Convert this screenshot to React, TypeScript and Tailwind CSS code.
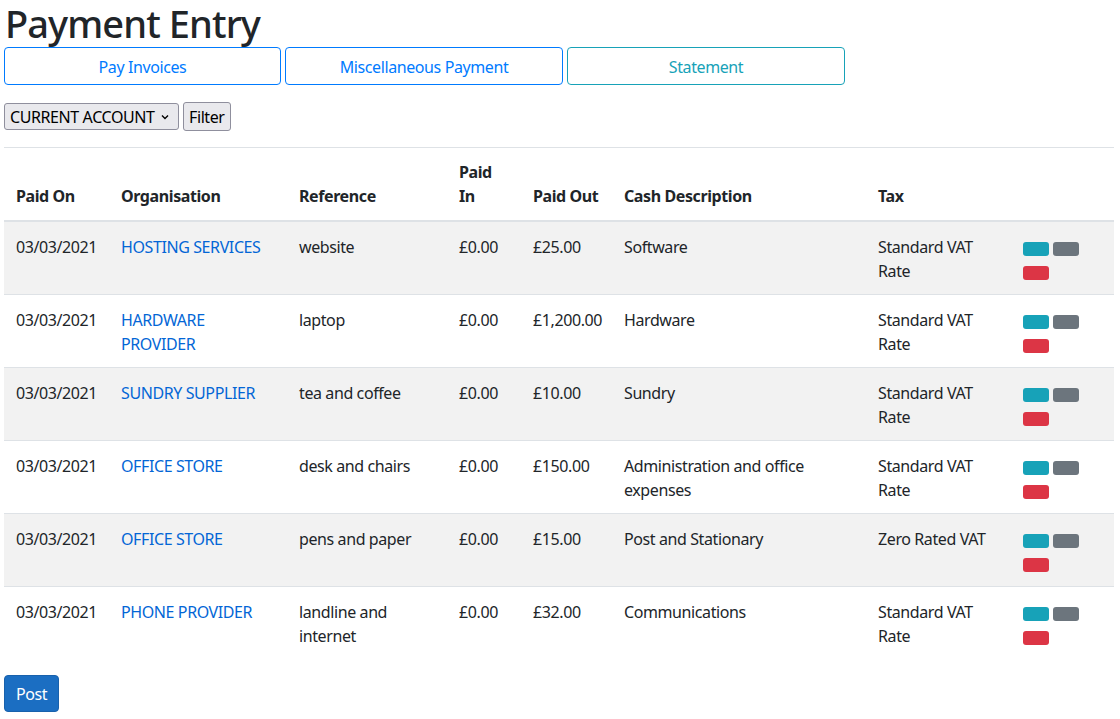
import React from "react";

type Row = {
  date: string;
  org: string;
  ref: string;
  paidIn: string;
  paidOut: string;
  desc: string;
  tax: string;
};

const rows: Row[] = [
  { date: "03/03/2021", org: "HOSTING SERVICES", ref: "website", paidIn: "£0.00", paidOut: "£25.00", desc: "Software", tax: "Standard VAT Rate" },
  { date: "03/03/2021", org: "HARDWARE PROVIDER", ref: "laptop", paidIn: "£0.00", paidOut: "£1,200.00", desc: "Hardware", tax: "Standard VAT Rate" },
  { date: "03/03/2021", org: "SUNDRY SUPPLIER", ref: "tea and coffee", paidIn: "£0.00", paidOut: "£10.00", desc: "Sundry", tax: "Standard VAT Rate" },
  { date: "03/03/2021", org: "OFFICE STORE", ref: "desk and chairs", paidIn: "£0.00", paidOut: "£150.00", desc: "Administration and office expenses", tax: "Standard VAT Rate" },
  { date: "03/03/2021", org: "OFFICE STORE", ref: "pens and paper", paidIn: "£0.00", paidOut: "£15.00", desc: "Post and Stationary", tax: "Zero Rated VAT" },
  { date: "03/03/2021", org: "PHONE PROVIDER", ref: "landline and internet", paidIn: "£0.00", paidOut: "£32.00", desc: "Communications", tax: "Standard VAT Rate" },
];

export default function App() {
  return (
    <div
      className="min-h-[719px] bg-white px-1 text-[16px] leading-6 tracking-[-0.025em] text-[#212529]"
      style={{ fontFamily: '"Segoe UI", "Noto Sans", "Open Sans", sans-serif' }}
    >
      <h1 className="whitespace-nowrap pl-[1px] text-[38px] font-medium leading-[47px] tracking-[-0.9px]">Payment Entry</h1>
      <div className="flex gap-1">
        <button className="h-[38px] w-[277px] rounded border border-[#007bff] bg-white pt-[2px] text-[#007bff]">Pay Invoices</button>
        <button className="h-[38px] w-[278px] rounded border border-[#007bff] bg-white pt-[2px] text-[#007bff]">Miscellaneous Payment</button>
        <button className="h-[38px] w-[278px] rounded border border-[#17a2b8] bg-white pt-[2px] text-[#17a2b8]">Statement</button>
      </div>
      <div className="mt-[17px] flex items-center gap-1">
        <div className="flex h-[27px] w-[175px] items-center justify-between whitespace-nowrap rounded-[3px] border border-[#8f8f9d] bg-[#e9e9ed] pl-[5px] pr-[9px] text-black">
          <span>CURRENT ACCOUNT</span>
          <svg width="8" height="6" viewBox="0 0 8 6" fill="none" stroke="#000" strokeWidth="1.4">
            <path d="M1 1.5l3 3 3-3" />
          </svg>
        </div>
        <button className="h-[29px] rounded-[3px] border border-[#8f8f9d] bg-[#e9e9ed] px-[5px] text-black">Filter</button>
      </div>
      <table className="mt-4 w-[1110px] table-fixed border-collapse">
        <colgroup>
          <col className="w-[105px]" />
          <col className="w-[178px]" />
          <col className="w-[160px]" />
          <col className="w-[74px]" />
          <col className="w-[91px]" />
          <col className="w-[254px]" />
          <col className="w-[145px]" />
          <col className="w-[103px]" />
        </colgroup>
        <thead>
          <tr className="text-left align-bottom">
            {["Paid On", "Organisation", "Reference", "Paid In", "Paid Out", "Cash Description", "Tax", ""].map((h, i) => (
              <th key={i} className="whitespace-nowrap border-t border-b-2 border-t-[#dee2e6] border-b-[#dee2e6] p-3 font-bold">
                {h === "Paid In" ? (
                  <>
                    Paid
                    <br />
                    In
                  </>
                ) : (
                  h
                )}
              </th>
            ))}
          </tr>
        </thead>
        <tbody>
          {rows.map((r, i) => (
            <tr key={i} className={`align-top ${i % 2 === 0 ? "bg-[#f2f2f2]" : "bg-white"}`}>
              <td className="border-t border-[#dee2e6] p-3 pt-[13px] pb-[11px]">{r.date}</td>
              <td className="border-t border-[#dee2e6] p-3 pt-[13px] pb-[11px]">
                <a className="text-[#0366d6]">{r.org}</a>
              </td>
              <td className="border-t border-[#dee2e6] p-3 pt-[13px] pb-[11px]">{r.ref}</td>
              <td className="border-t border-[#dee2e6] p-3 pt-[13px] pb-[11px]">{r.paidIn}</td>
              <td className="border-t border-[#dee2e6] p-3 pt-[13px] pb-[11px]">{r.paidOut}</td>
              <td className="border-t border-[#dee2e6] p-3 pt-[13px] pb-[11px]">{r.desc}</td>
              <td className="border-t border-[#dee2e6] p-3 pt-[13px] pb-[11px]">{r.tax}</td>
              <td className="border-t border-[#dee2e6] p-3">
                <div className="flex h-12 flex-col">
                  <div className="mt-2 flex gap-1">
                    <span className="h-[14px] w-[26px] rounded-[3px] bg-[#17a2b8]" />
                    <span className="h-[14px] w-[26px] rounded-[3px] bg-[#6c757d]" />
                  </div>
                  <span className="mt-[10px] h-[14px] w-[26px] rounded-[3px] bg-[#dc3545]" />
                </div>
              </td>
            </tr>
          ))}
        </tbody>
      </table>
      <button className="mt-4 h-[37px] w-[55px] rounded border border-[#1861ac] bg-[#1b6ec2] pt-[1px] text-white">Post</button>
    </div>
  );
}
